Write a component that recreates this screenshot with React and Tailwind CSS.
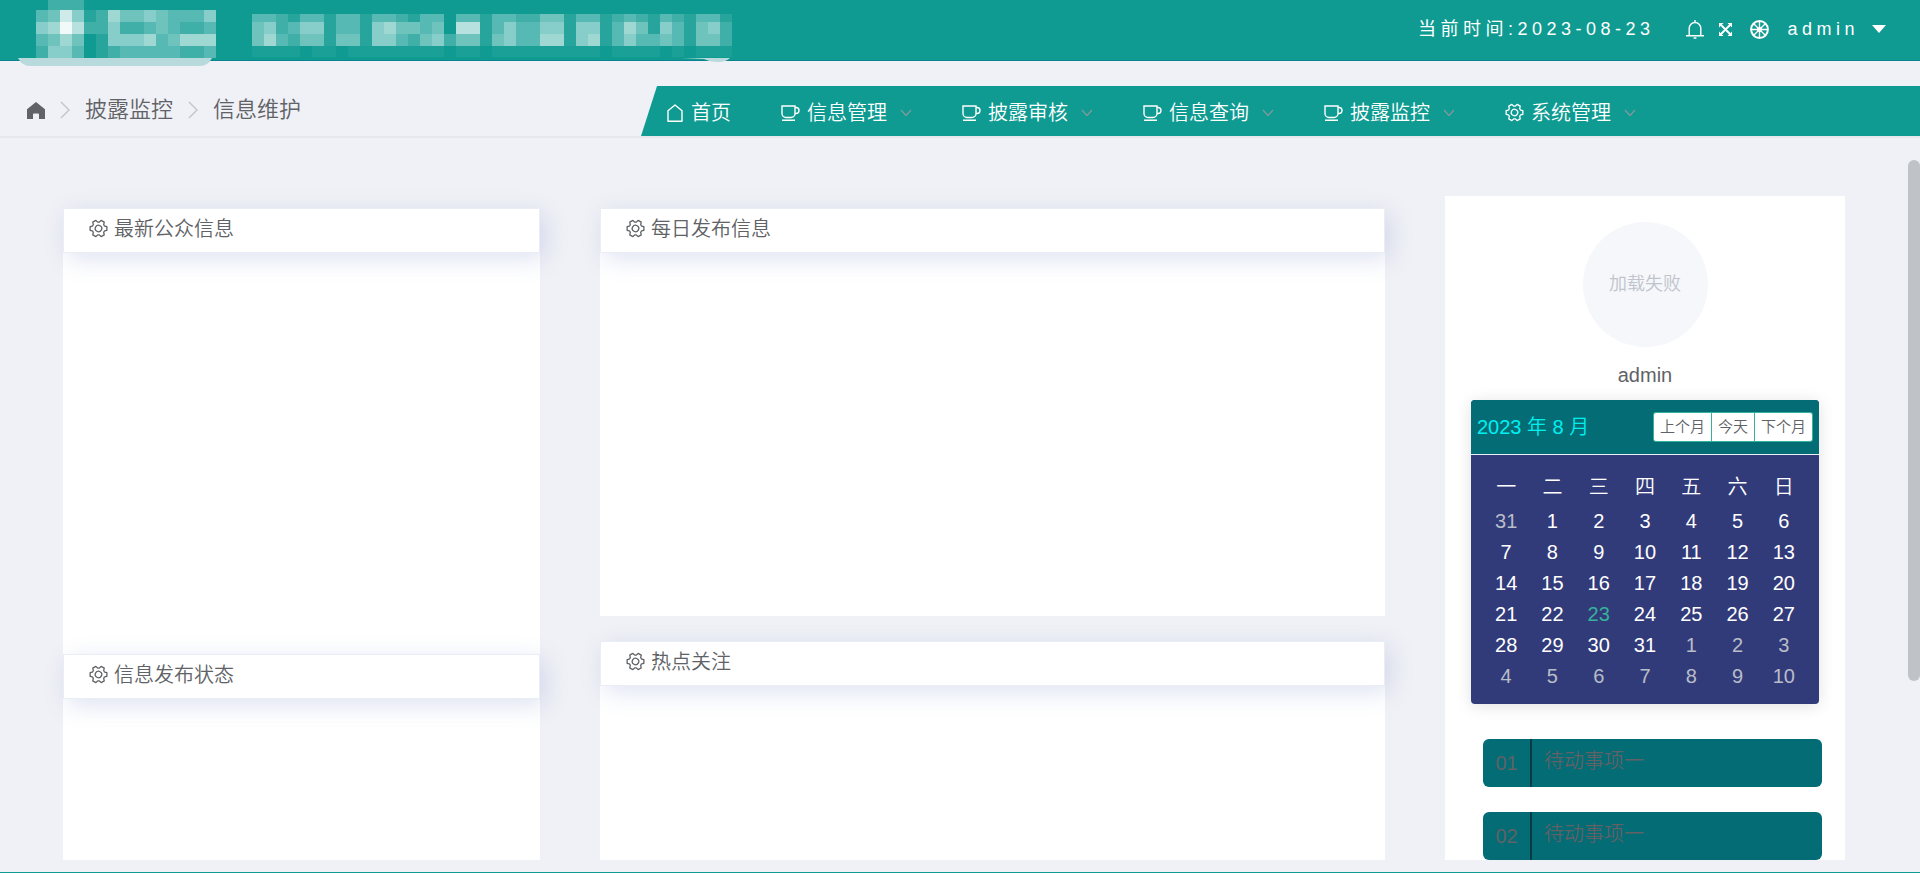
const SETTING_PATH =
  'M600.704 64a32 32 0 0 1 30.464 22.208l35.2 109.376c14.784 7.232 28.928 15.36 42.432 24.512l112.384-24.192a32 32 0 0 1 34.432 15.36L944.32 364.8a32 32 0 0 1-4.032 37.504l-77.12 85.12a357.12 357.12 0 0 1 0 49.024l77.12 85.248a32 32 0 0 1 4.032 37.504l-88.704 153.6a32 32 0 0 1-34.432 15.296L708.8 803.904c-13.44 9.088-27.648 17.28-42.368 24.512l-35.264 109.376A32 32 0 0 1 600.704 960H423.296a32 32 0 0 1-30.464-22.208L357.696 828.48a351.616 351.616 0 0 1-42.56-24.64l-112.32 24.256a32 32 0 0 1-34.432-15.36L79.68 659.2a32 32 0 0 1 4.032-37.504l77.12-85.248a357.12 357.12 0 0 1 0-48.896l-77.12-85.248A32 32 0 0 1 79.68 364.8l88.704-153.6a32 32 0 0 1 34.432-15.296l112.32 24.256c13.568-9.152 27.776-17.408 42.56-24.64l35.2-109.312A32 32 0 0 1 423.232 64H600.64zm-23.424 64H446.72l-36.352 113.088-24.512 11.968a294.113 294.113 0 0 0-34.816 20.096l-22.656 15.36-116.224-25.088-65.28 113.152 79.68 88.192-1.92 27.136a293.12 293.12 0 0 0 0 40.192l1.92 27.136-79.808 88.192 65.344 113.152 116.224-25.024 22.656 15.296a294.113 294.113 0 0 0 34.816 20.096l24.512 11.968L446.72 896h130.688l36.48-113.152 24.448-11.904a288.282 288.282 0 0 0 34.752-20.096l22.592-15.296 116.288 25.024 65.28-113.152-79.744-88.192 1.92-27.136a293.12 293.12 0 0 0 0-40.256l-1.92-27.136 79.808-88.128-65.344-113.152-116.288 24.96-22.592-15.232a287.616 287.616 0 0 0-34.752-20.096l-24.448-11.904L577.344 128zM512 320a192 192 0 1 1 0 384 192 192 0 0 1 0-384zm0 64a128 128 0 1 0 0 256 128 128 0 0 0 0-256z'

function SettingIcon() {
  return (
    <svg viewBox="40 40 944 944" fill="currentColor" className="w-[19px] h-[19px] shrink-0">
      <path d={SETTING_PATH} transform="rotate(30 512 512)" />
    </svg>
  )
}

function CupIcon() {
  return (
    <svg viewBox="0 0 19 16" fill="none" stroke="currentColor" strokeWidth="1.4" className="w-[19px] h-4 shrink-0">
      <path d="M1 1h13v7.5a4 4 0 0 1-4 4H5a4 4 0 0 1-4-4z" />
      <path d="M14 2.5h1a3 3 0 0 1 0 6h-1M1 15.2h13" />
    </svg>
  )
}

function HouseIcon() {
  return (
    <svg viewBox="0 0 16 18" fill="none" stroke="currentColor" strokeWidth="1.4" strokeLinejoin="round" className="w-4 h-[18px] shrink-0">
      <path d="M1 17.2V6.8L8 1l7 5.8v10.4z" />
    </svg>
  )
}

function HomeSolidIcon() {
  return (
    <svg viewBox="0 0 18 17" fill="currentColor" className="w-[18px] h-[17px] shrink-0">
      <path d="M9 0l9 7.2V17h-6v-4.5a1 1 0 0 0-1-1H7a1 1 0 0 0-1 1V17H0V7.2z" />
    </svg>
  )
}

function ChevronRight() {
  return (
    <svg viewBox="0 0 10 18" fill="none" stroke="#c0c4cc" strokeWidth="1.4" className="w-[10px] h-[18px] shrink-0">
      <path d="M1 1l8 8-8 8" />
    </svg>
  )
}

function BellIcon() {
  return (
    <svg viewBox="0 0 18 19" fill="none" stroke="currentColor" strokeWidth="1.4" className="w-[18px] h-[19px]">
      <path d="M3.2 15.5V8.3a5.8 5.8 0 0 1 11.6 0v7.2M0 15.7h18M9 0v2.5M7.6 18h2.8" />
    </svg>
  )
}

function FullscreenIcon() {
  return (
    <svg viewBox="0 0 15 15" fill="none" stroke="currentColor" strokeWidth="1.8" className="w-[15px] h-[15px]">
      <path d="M2 2l11 11M13 2L2 13" />
      <path d="M1 1h4.5L1 5.5zM14 1v4.5L9.5 1zM14 14H9.5L14 9.5zM1 14V9.5L5.5 14z" fill="currentColor" stroke="none" />
    </svg>
  )
}

function WheelIcon() {
  return (
    <svg viewBox="0 0 19 19" fill="none" stroke="currentColor" strokeWidth="1.4" className="w-[19px] h-[19px]">
      <circle cx="9.5" cy="9.5" r="8.4" strokeWidth="2" />
      <circle cx="9.5" cy="9.5" r="1.8" />
      <path d="M9.5 1v17M1 9.5h17M3.5 3.5l12 12M15.5 3.5l-12 12" />
    </svg>
  )
}

// Each digit is the white overlay strength of one 12px cell, in tenths
const logoRows = [
  { y: 0, h: 10, cells: '.222...........' },
  { y: 10, h: 12, cells: '348512644543335' },
  { y: 22, h: 12, cells: '56X722522343223' },
  { y: 34, h: 12, cells: '346401555634666' },
  { y: 46, h: 12, cells: '255301233333223' },
]

const titleRows = [
  { y: 14, h: 8, cells: '3321331331332133.33133224413312321321331' },
  { y: 22, h: 12, cells: '4523551331564434.77135335515513641531452' },
  { y: 34, h: 12, cells: '4632441441553245244145336615613533431442' },
  { y: 46, h: 11, cells: 'aaaa.aa.aaaaaaaa.aa.aaaaaaaaa.aaaa.a.aaa' },
]

function cellOpacity(c) {
  if (c === 'X') return 0.95
  if (c === 'a') return 0.05
  return Number(c) / 10
}

function Mosaic({ rows, offset }) {
  return rows.map(row =>
    row.cells.split('').map((c, i) =>
      c === '.' ? null : (
        <rect key={`${row.y}-${i}`} x={offset + i * 12} y={row.y} width="12" height={row.h} fill="#fff" fillOpacity={cellOpacity(c)} />
      )
    )
  )
}

const menus = [
  { label: '信息管理', icon: <CupIcon /> },
  { label: '披露审核', icon: <CupIcon /> },
  { label: '信息查询', icon: <CupIcon /> },
  { label: '披露监控', icon: <CupIcon /> },
  { label: '系统管理', icon: <SettingIcon /> },
]

const weekdays = ['一', '二', '三', '四', '五', '六', '日']

const weeks = [
  [31, 1, 2, 3, 4, 5, 6],
  [7, 8, 9, 10, 11, 12, 13],
  [14, 15, 16, 17, 18, 19, 20],
  [21, 22, 23, 24, 25, 26, 27],
  [28, 29, 30, 31, 1, 2, 3],
  [4, 5, 6, 7, 8, 9, 10],
]

const todos = [
  { no: '01', text: '待动事项一' },
  { no: '02', text: '待动事项一' },
]

function dayColor(day, week) {
  if ((week === 0 && day > 7) || (week > 3 && day < 15)) return 'text-[#b9bdc8]'
  if (day === 23) return 'text-[#35b29c]'
  return 'text-white'
}

function TopBar() {
  return (
    <header className="flex items-start justify-between h-[61px] shrink-0 bg-[#0f9b92] border-b border-[#0a8390] text-white">
      <svg viewBox="0 0 740 66" className="w-[740px] h-[66px] shrink-0 relative z-10">
        <path d="M18 58h194q-4 8-12 8H30q-8 0-12-8z" fill="#b8dadc" />
        <path d="M682 58h48q-4 4-12 4-8 0-14-3z" fill="#b8dadc" />
        <Mosaic rows={logoRows} offset={36} />
        <Mosaic rows={titleRows} offset={252} />
      </svg>
      <div className="flex items-center h-[58px] pr-[34px] text-[18px] tracking-[0.25em]">
        <span className="mr-8">当前时间:2023-08-23</span>
        <button type="button" aria-label="消息" className="mr-[14px]"><BellIcon /></button>
        <button type="button" aria-label="全屏" className="mr-[17px]"><FullscreenIcon /></button>
        <button type="button" aria-label="主题" className="mr-[18px]"><WheelIcon /></button>
        <button type="button" className="flex items-center gap-[13px] tracking-[0.25em]">
          admin
          <svg viewBox="0 0 14 8" fill="currentColor" className="w-[14px] h-2">
            <path d="M0 0h14L7 8z" />
          </svg>
        </button>
      </div>
    </header>
  )
}

function NavBar() {
  return (
    <div className="flex items-end justify-between h-[77px] shrink-0 border-b-2 border-[#e4e7ee]">
      <div className="flex items-center gap-[15px] pl-[27px] pb-[14px] text-[22px] leading-6 font-[350] text-[#606266]">
        <a href="#home" aria-label="首页"><HomeSolidIcon /></a>
        <ChevronRight />
        <a href="#monitor">披露监控</a>
        <ChevronRight />
        <span>信息维护</span>
      </div>
      <nav className="flex items-center w-2/3 h-[50px] pt-[3px] pl-[27px] gap-[50px] bg-[#0f9b92] text-white text-[20px] font-[350] [clip-path:polygon(17px_0,100%_0,100%_100%,1px_100%)]">
        <a href="#index" className="flex items-center gap-2">
          <HouseIcon />
          首页
        </a>
        {menus.map(menu => (
          <a key={menu.label} href="#menu" className="flex items-center gap-[7px]">
            {menu.icon}
            {menu.label}
            <svg viewBox="0 0 12 8" fill="none" stroke="#84999b" strokeWidth="1.2" className="w-3 h-2 ml-[6px]">
              <path d="M1 1l5 5.5L11 1" />
            </svg>
          </a>
        ))}
      </nav>
    </div>
  )
}

function Panel({ title, className }) {
  return (
    <section className={`bg-white ${className}`}>
      <h2 className="flex items-center h-[45px] pl-[25px] pb-1 gap-[6px] bg-white border border-[#e9edf5] text-[20px] font-[350] text-[#606266] shadow-[5px_6px_24px_rgba(90,110,190,0.2)]">
        <SettingIcon />
        {title}
      </h2>
    </section>
  )
}

function Calendar() {
  const btn = 'h-7 px-[6px] bg-white text-[15px] font-[350] text-[#606266]'
  return (
    <div className="rounded overflow-hidden bg-[#323b7a] shadow-[0_2px_16px_rgba(0,0,0,0.12)]">
      <div className="flex items-center justify-between h-[55px] pl-[6px] pr-[6px] bg-[#036c75] border-b border-[#ebeef5]">
        <div className="text-[20px] text-[#00f0f0] font-[350]">2023 年 8 月</div>
        <div className="flex gap-px p-px rounded-[3px] bg-[#35b29c] overflow-hidden">
          <button type="button" className={`${btn} rounded-l-[2px]`}>上个月</button>
          <button type="button" className={btn}>今天</button>
          <button type="button" className={`${btn} rounded-r-[2px]`}>下个月</button>
        </div>
      </div>
      <div className="px-3 pt-[14px] pb-[13px]">
        <table className="w-full table-fixed text-center text-[20px]">
          <thead>
            <tr className="h-9 text-white">
              {weekdays.map(d => <th key={d} className="p-0 font-[350] leading-6">{d}</th>)}
            </tr>
          </thead>
          <tbody>
            {weeks.map((week, w) => (
              <tr key={w} className="h-[31px]">
                {week.map(day => <td key={day} className={`p-0 leading-6 ${dayColor(day, w)}`}>{day}</td>)}
              </tr>
            ))}
          </tbody>
        </table>
      </div>
    </div>
  )
}

function SidePanel() {
  return (
    <aside className="bg-white pt-[26px] min-h-0">
      <div className="flex items-center justify-center w-[125px] h-[125px] mx-auto rounded-full bg-[#f5f7fa] text-[18px] font-[350] text-[#c0c4cc]">
        加载失败
      </div>
      <div className="mt-4 mb-[13px] text-center text-[20px] leading-6 text-[#606266]">admin</div>
      <div className="px-[26px]">
        <Calendar />
      </div>
      <ul className="flex flex-col gap-[25px] mt-[35px] pl-[38px] pr-[23px] text-[20px] font-[350] text-[#606266]">
        {todos.map(todo => (
          <li key={todo.no} className="flex h-12 rounded-md bg-[#036c75]">
            <span className="flex items-center justify-center w-[49px] border-r-2 border-[#0c3b44]">{todo.no}</span>
            <span className="pl-3 pt-[9px] leading-[26px]">{todo.text}</span>
          </li>
        ))}
      </ul>
    </aside>
  )
}

export default function App() {
  return (
    <div className="flex flex-col h-screen overflow-hidden bg-[#f0f1f6] border-b border-[#0f9b92] font-['Liberation_Sans','Noto_Sans_CJK_SC',sans-serif]">
      <TopBar />
      <NavBar />
      <main className="flex flex-1 min-h-0 pb-3">
        <div className="grid grid-cols-[477fr_785fr_400fr] gap-[60px] flex-1 pl-[63px] pr-[63px] pt-[58px]">
          <div className="flex flex-col pt-3">
            <Panel title="最新公众信息" className="h-[446px]" />
            <Panel title="信息发布状态" className="flex-1" />
          </div>
          <div className="flex flex-col gap-[25px] pt-3">
            <Panel title="每日发布信息" className="h-[408px]" />
            <Panel title="热点关注" className="flex-1" />
          </div>
          <SidePanel />
        </div>
        <div className="w-3 shrink-0 pt-[22px]">
          <div className="h-[521px] rounded-md bg-[#bfc3c7]" />
        </div>
      </main>
    </div>
  )
}
